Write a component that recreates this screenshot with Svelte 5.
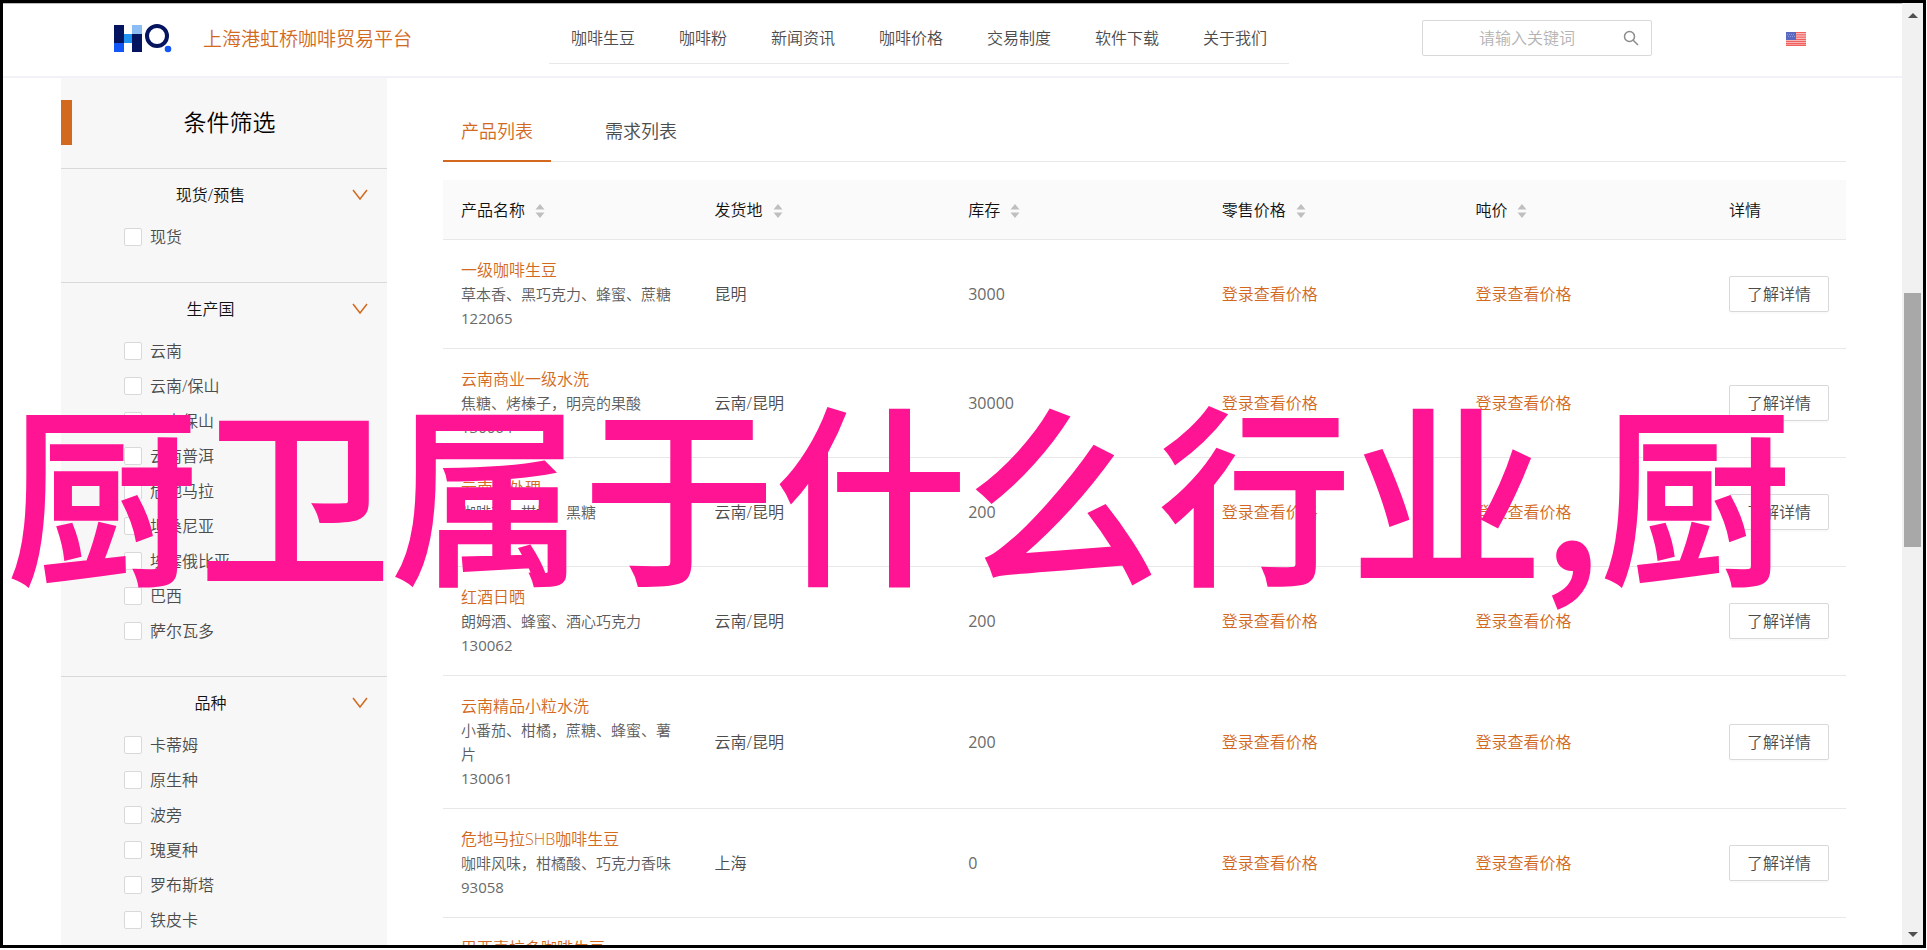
<script lang="ts">
  const navItems = ['咖啡生豆', '咖啡粉', '新闻资讯', '咖啡价格', '交易制度', '软件下载', '关于我们']

  const filters = [
    {title: '现货/预售', options: ['现货']},
    {
      title: '生产国',
      options: ['云南', '云南/保山', '云南保山', '云南普洱', '危地马拉', '坦桑尼亚', '埃塞俄比亚', '巴西', '萨尔瓦多'],
    },
    {title: '品种', options: ['卡蒂姆', '原生种', '波旁', '瑰夏种', '罗布斯塔', '铁皮卡']},
  ]

  const columns = ['产品名称', '发货地', '库存', '零售价格', '吨价']

  const products = [
    {name: '一级咖啡生豆', flavour: '草本香、黑巧克力、蜂蜜、蔗糖', code: '122065', origin: '昆明', stock: 3000},
    {name: '云南商业一级水洗', flavour: '焦糖、烤榛子，明亮的果酸', code: '130064', origin: '云南/昆明', stock: 30000},
    {name: '云南蜜处理', flavour: '咖啡花、柑橘、黑糖', code: '130063', origin: '云南/昆明', stock: 200},
    {name: '红酒日晒', flavour: '朗姆酒、蜂蜜、酒心巧克力', code: '130062', origin: '云南/昆明', stock: 200},
    {name: '云南精品小粒水洗', flavour: '小番茄、柑橘，蔗糖、蜂蜜、薯片', code: '130061', origin: '云南/昆明', stock: 200},
    {name: '危地马拉SHB咖啡生豆', flavour: '咖啡风味，柑橘酸、巧克力香味', code: '93058', origin: '上海', stock: 0},
    {name: '巴西喜拉多咖啡生豆', flavour: '坚果、巧克力', code: '93057', origin: '上海', stock: 0},
  ]

  let tab = $state('产品列表')
  let keyword = $state('')
</script>

<div class="frame">
  <div class="page">
    <header>
      <a class="brand" href="#home">
        <svg width="58" height="30" viewBox="0 0 58 30" aria-hidden="true">
          <path fill="#04145f" d="M0 1h10v18H0zM18 10h10v18H18z" />
          <path fill="#1257f5" d="M0 19h10v9H0z" />
          <path fill="#8bbcf4" d="M18 1h10v9H18z" />
          <path fill="#1f93ef" d="M10 10h8v9h-8z" />
          <circle cx="43" cy="12" r="10" fill="none" stroke="#04145f" stroke-width="4" />
          <circle cx="54" cy="25" r="3.3" fill="#1257f5" />
        </svg>
        <span>上海港虹桥咖啡贸易平台</span>
      </a>
      <nav>
        {#each navItems as item}
          <a href="#nav">{item}</a>
        {/each}
      </nav>
      <form class="search">
        <input type="text" placeholder="请输入关键词" aria-label="请输入关键词" bind:value={keyword} />
        <button type="button" aria-label="搜索">
          <svg width="16" height="16" viewBox="0 0 16 16" fill="none" stroke="#8c8c8c" stroke-width="1.5">
            <circle cx="6.5" cy="6.5" r="5" />
            <path d="M10.2 10.2 15 15" />
          </svg>
        </button>
      </form>
      <button class="flag" type="button" aria-label="English">
        <svg width="20" height="16" viewBox="0 0 20 16">
          <path fill="#fbd5d5" d="M0 1h20v14H0z" />
          <path stroke="#f0605f" stroke-width="1.3" d="M0 1.7h20M0 3.9h20M0 6.1h20M0 8.3h20M0 10.4h20M0 12.5h20M0 14.4h20" />
          <path fill="#5a68c0" d="M0 1h10v8H0z" />
          <path stroke="#8e98d8" stroke-dasharray="1 1" d="M1 3.5h8M2 5.5h7" />
        </svg>
      </button>
    </header>

    <div class="body">
      <aside>
        <h2>条件筛选</h2>
        {#each filters as group}
          <section>
            <button class="group" type="button">
              <span>{group.title}</span>
              <svg width="16" height="12" viewBox="0 0 16 12" fill="none" stroke="#d2691e" stroke-width="1.5">
                <path d="M1 1l7 9 7-9" />
              </svg>
            </button>
            {#each group.options as option}
              <label><input type="checkbox" />{option}</label>
            {/each}
          </section>
        {/each}
      </aside>

      <main>
        <div class="tabs" role="tablist">
          {#each ['产品列表', '需求列表'] as name}
            <button type="button" role="tab" aria-selected={tab === name} class:active={tab === name} onclick={() => tab = name}>
              {name}
            </button>
          {/each}
        </div>
        <table>
          <thead>
            <tr>
              {#each columns as column}
                <th>
                  <span class="sort">
                    {column}
                    <svg width="10" height="16" viewBox="0 -2 10 16" fill="#bfbfbf" aria-hidden="true">
                      <path d="M5 0l4.5 5.5h-9zM5 14l4.5-5.5h-9z" />
                    </svg>
                  </span>
                </th>
              {/each}
              <th class="detail">详情</th>
            </tr>
          </thead>
          <tbody>
            {#each products as product}
              <tr>
                <td>
                  <a href="#product">{product.name}</a>
                  <p>{product.flavour}</p>
                  <p class="number">{product.code}</p>
                </td>
                <td>{product.origin}</td>
                <td class="number">{product.stock}</td>
                <td><a href="#login">登录查看价格</a></td>
                <td><a href="#login">登录查看价格</a></td>
                <td><button type="button">了解详情</button></td>
              </tr>
            {/each}
          </tbody>
        </table>
      </main>
    </div>
  </div>

  <div class="scrollbar" aria-hidden="true">
    <svg width="10" height="5" viewBox="0 0 10 5"><path fill="#505050" d="M5 0l5 5H0z" /></svg>
    <div class="track"><div class="thumb"></div></div>
    <svg width="10" height="5" viewBox="0 0 10 5"><path fill="#505050" d="M0 0h10L5 5z" /></svg>
  </div>

  <p class="headline">厨卫属于什么行业,厨</p>
</div>

<style>
  :global(body) {
    background: #fff;
  }

  .frame {
    --accent: #d2691e;

    position: relative;
    box-sizing: border-box;
    display: flex;
    height: calc(100vh - 2px);
    margin-right: 1px;
    border: 3px solid #000;
    overflow: hidden;
    color: #4c4c4c;
    font: 350 16px/24px "Open Sans", "Noto Sans CJK SC", sans-serif;
  }

  button,
  input {
    margin: 0;
    padding: 0;
    border: 0;
    background: none;
    color: inherit;
    font: inherit;
  }

  a {
    color: var(--accent);
    text-decoration: none;
  }

  p {
    margin: 0;
  }

  .page {
    flex: 1;
    min-width: 0;
    border-top: 1px solid #bbb;
  }

  header {
    display: flex;
    align-items: flex-start;
    height: 72px;
    border-bottom: 2px solid #f0f2f8;
  }

  .brand {
    display: flex;
    align-items: center;
    gap: 31px;
    width: 435px;
    margin-top: 20px;
    padding-left: 111px;
    box-sizing: border-box;
    font-size: 19px;
  }

  nav {
    display: flex;
    margin-left: 111px;
    border-bottom: 1px solid #e8e8e8;

    a {
      padding: 22px 22px 13px;
      color: #4c4c4c;
      white-space: nowrap;
    }
  }

  .search {
    display: flex;
    align-items: center;
    box-sizing: border-box;
    width: 230px;
    height: 36px;
    margin: 16px 134px 0 auto;
    padding: 0 12px;
    border: 1px solid #d9d9d9;
    border-radius: 2px;

    input {
      flex: 1;
      min-width: 0;
      padding-right: 4px;
      text-align: center;
      outline: none;

      &::placeholder {
        color: #b4b4b4;
      }
    }

    button {
      display: flex;
    }
  }

  .flag {
    display: flex;
    margin: 27px 96px 0 0;
  }

  .body {
    display: flex;
    gap: 56px;
    padding: 0 56px 0 58px;
  }

  aside {
    flex: none;
    width: 326px;
    padding-top: 22px;
    background: #f7f7f7;
  }

  h2 {
    margin: 0;
    border-left: 11px solid var(--accent);
    color: #000;
    font-size: 23px;
    font-weight: 350;
    line-height: 45px;
    text-align: center;
  }

  section {
    padding-bottom: 28px;
    border-top: 1px solid #d9d9d9;
  }

  h2 + section {
    margin-top: 23px;
  }

  .group {
    display: flex;
    align-items: center;
    width: 100%;
    padding: 14px 19px 12px 8px;
    color: #111;

    span {
      flex: 1;
    }
  }

  label {
    display: flex;
    align-items: center;
    gap: 8px;
    height: 35px;
    padding-left: 63px;
  }

  input[type="checkbox"] {
    appearance: none;
    box-sizing: border-box;
    width: 18px;
    height: 18px;
    border: 1px solid #d9d9d9;
    border-radius: 2px;
    background: #fff;

    &:checked {
      background: var(--accent);
    }
  }

  main {
    flex: 1;
    min-width: 0;
    padding-top: 22px;
  }

  .tabs {
    display: flex;
    gap: 36px;
    margin-bottom: 18px;
    border-bottom: 1px solid #e8e8e8;

    button {
      margin-bottom: -1px;
      padding: 19px 18px 17px;
      border-bottom: 2px solid transparent;
      font-size: 18px;
    }

    .active {
      border-color: var(--accent);
      color: var(--accent);
    }
  }

  table {
    width: 100%;
    border-spacing: 0;
    table-layout: fixed;
  }

  th,
  td {
    padding: 18px;
    border-bottom: 1px solid #e8e8e8;
    text-align: left;
  }

  th {
    padding-bottom: 17px;
    background: #fafafa;
    color: #111;
    font-weight: 350;
  }

  .detail {
    width: 99px;
  }

  .sort {
    display: flex;
    align-items: center;
    gap: 10px;
  }

  td p {
    color: #5c5c5c;
    font-size: 15px;
  }

  .number {
    color: #6a6a6a;
    font-weight: 400;
  }

  td button {
    box-sizing: border-box;
    height: 36px;
    padding: 0 17px;
    border: 1px solid #d9d9d9;
    border-radius: 2px;
    box-shadow: 0 2px 0 rgb(0 0 0 / 2%);
    white-space: nowrap;
  }

  .scrollbar {
    display: flex;
    flex-direction: column;
    align-items: center;
    box-sizing: border-box;
    width: 21px;
    padding: 10px 0 8px;
    background: #f1f1f1;
  }

  .track {
    flex: 1;
    width: 17px;
    padding-top: 275px;
  }

  .thumb {
    height: 254px;
    background: #a8a8a8;
  }

  .headline {
    position: absolute;
    top: 339px;
    left: 4px;
    color: #ff1493;
    font-family: "Noto Sans CJK SC", sans-serif;
    font-size: 192px;
    font-weight: 500;
    line-height: 288px;
    white-space: nowrap;
    pointer-events: none;
    -webkit-text-stroke: 2px #ff1493;
  }
</style>
